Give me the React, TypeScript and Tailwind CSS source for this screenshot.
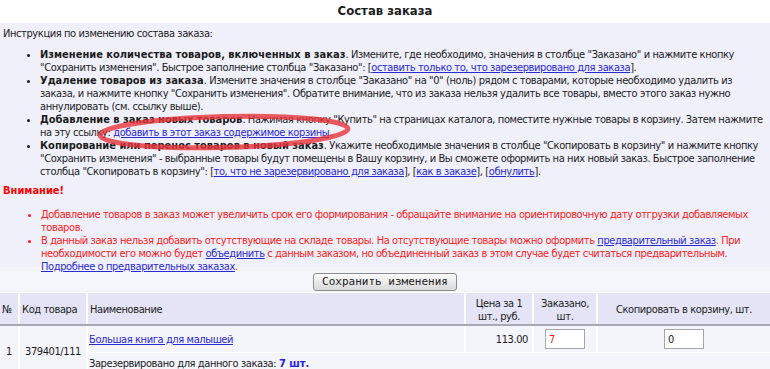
import React from "react";

const Link = ({ children }: { children: React.ReactNode }) => (
    <a href="#" className="text-[#2929d4] underline">
        {children}
    </a>
);

const headCell = "bg-[#e4e4f6] flex items-center pt-[2px]";
const bodyCell = "bg-[#f4f4fb] flex items-center";

export default function App() {
    return (
        <div className="w-[770px] h-[369px] overflow-hidden bg-white text-[11px] leading-[13px] tracking-[-0.4px] [&_b]:tracking-normal text-[#1c1c1c] font-[family-name:'DejaVu_Sans_Condensed','DejaVu_Sans',sans-serif] [font-stretch:condensed]">
            <h1 className="h-[23px] pt-[3px] text-center text-[13px] leading-[16px] font-bold tracking-normal">
                Состав заказа
            </h1>

            {/* instructions panel */}
            <div className="relative h-[244px] bg-[#f0f0fb] pt-[4px] pl-[3px] whitespace-nowrap">
                <p>Инструкция по изменению состава заказа:</p>
                <ul className="mt-[8px] pl-[37px] list-disc">
                    <li>
                        <b>Изменение количества товаров, включенных в заказ</b>.
                        Измените, где необходимо, значения в столбце "Заказано" и
                        нажмите кнопку
                        <br />
                        "Сохранить изменения". Быстрое заполнение столбца
                        "Заказано": [
                        <Link>оставить только то, что зарезервировано для заказа</Link>
                        ].
                    </li>
                    <li>
                        <b>Удаление товаров из заказа</b>. Измените значения в
                        столбце "Заказано" на "0" (ноль) рядом с товарами, которые
                        необходимо удалить из
                        <br />
                        заказа, и нажмите кнопку "Сохранить изменения". Обратите
                        внимание, что из заказа нельзя удалить все товары, вместо
                        этого заказ нужно
                        <br />
                        аннулировать (см. ссылку выше).
                    </li>
                    <li>
                        <b>Добавление в заказ новых товаров</b>. Нажимая кнопку
                        "Купить" на страницах каталога, поместите нужные товары в
                        корзину. Затем нажмите
                        <br />
                        на эту ссылку:{" "}
                        <Link>добавить в этот заказ содержимое корзины</Link>.
                    </li>
                    <li>
                        <b>Копирование или перенос товаров в новый заказ</b>.
                        Укажите необходимые значения в столбце "Скопировать в
                        корзину" и нажмите кнопку
                        <br />
                        "Сохранить изменения" - выбранные товары будут помещены в
                        Вашу корзину, и Вы сможете оформить на них новый заказ.
                        Быстрое заполнение
                        <br />
                        столбца "Скопировать в корзину": [
                        <Link>то, что не зарезервировано для заказа</Link>], [
                        <Link>как в заказе</Link>], [<Link>обнулить</Link>].
                    </li>
                </ul>

                <p className="mt-[6px] font-bold text-[#ff0000] tracking-normal">Внимание!</p>
                <ul className="mt-[11px] pl-[38px] list-disc text-[#ff1a1a]">
                    <li>
                        Добавление товаров в заказ может увеличить срок его
                        формирования - обращайте внимание на ориентировочную дату
                        отгрузки добавляемых
                        <br />
                        товаров.
                    </li>
                    <li>
                        В данный заказ нельзя добавить отсутствующие на складе
                        товары. На отсутствующие товары можно оформить{" "}
                        <Link>предварительный заказ</Link>. При
                        <br />
                        необходимости его можно будет <Link>объединить</Link> с
                        данным заказом, но объединенный заказ в этом случае будет
                        считаться предварительным.
                        <br />
                        <Link>Подробнее о предварительных заказах</Link>.
                    </li>
                </ul>

                {/* hand-drawn red mark round the link */}
                <svg
                    className="absolute left-[94px] top-[88px] pointer-events-none"
                    width="260"
                    height="42"
                    viewBox="0 0 260 42"
                >
                    <ellipse
                        cx="130"
                        cy="21"
                        rx="124"
                        ry="15.5"
                        transform="rotate(-1.5 130 21)"
                        fill="none"
                        stroke="#e8333a"
                        strokeOpacity="0.8"
                        strokeWidth="5"
                    />
                </svg>
            </div>

            <div className="h-[25px] bg-[#f5f5fc] flex justify-center pt-[6px]">
                <button className="h-[18px] w-[144px] rounded-[3px] border border-[#8c8c8c] bg-linear-to-b from-[#fbfbfb] to-[#d9d9d9] font-[family-name:'DejaVu_Sans_Mono',monospace] tracking-normal text-[11px] leading-[14px] text-[#222]">
                    Сохранить изменения
                </button>
            </div>

            {/* order table */}
            <div className="pt-[1px] bg-white">
                <div className="grid grid-cols-[18px_66px_376px_66px_62px_1fr] gap-x-[2px] h-[33px] border-b-2 border-[#a9a9b4]">
                    <div className={`${headCell} pl-[2px]`}>№</div>
                    <div className={`${headCell} pl-[2px]`}>Код товара</div>
                    <div className={`${headCell} pl-[2px]`}>Наименование</div>
                    <div className={`${headCell} justify-center text-center`}>
                        Цена за 1<br />
                        шт., руб.
                    </div>
                    <div className={`${headCell} justify-center text-center`}>
                        Заказано,
                        <br />
                        шт.
                    </div>
                    <div className={`${headCell} justify-center`}>
                        Скопировать в корзину, шт.
                    </div>
                </div>
                <div className="grid grid-cols-[18px_66px_376px_66px_62px_1fr] grid-rows-[26px_20px] gap-x-[2px] gap-y-[1px]">
                    <div className={`${bodyCell} row-span-2 justify-center pt-[3px]`}>1</div>
                    <div className={`${bodyCell} row-span-2 justify-center pt-[3px]`}>
                        379401/111
                    </div>
                    <div className={`${bodyCell} pl-[1px]`}>
                        <Link>Большая книга для малышей</Link>
                    </div>
                    <div className={`${bodyCell} justify-end pr-[4px]`}>113.00</div>
                    <div className={`${bodyCell} justify-center`}>
                        <input
                            defaultValue="7"
                            className="w-[40px] h-[20px] bg-white border border-[#a6a6a6] px-[3px] text-[11px] text-[#ff2020]"
                        />
                    </div>
                    <div className={`${bodyCell} justify-center`}>
                        <input
                            defaultValue="0"
                            className="w-[40px] h-[20px] bg-white border border-[#a6a6a6] px-[3px] text-[11px] text-[#1c1c1c]"
                        />
                    </div>
                    <div className={`${bodyCell} col-span-4 pl-[1px]`}>
                        Зарезервировано для данного заказа:&nbsp;
                        <b className="text-[#2222dd]">7 шт.</b>
                    </div>
                </div>
            </div>
        </div>
    );
}
